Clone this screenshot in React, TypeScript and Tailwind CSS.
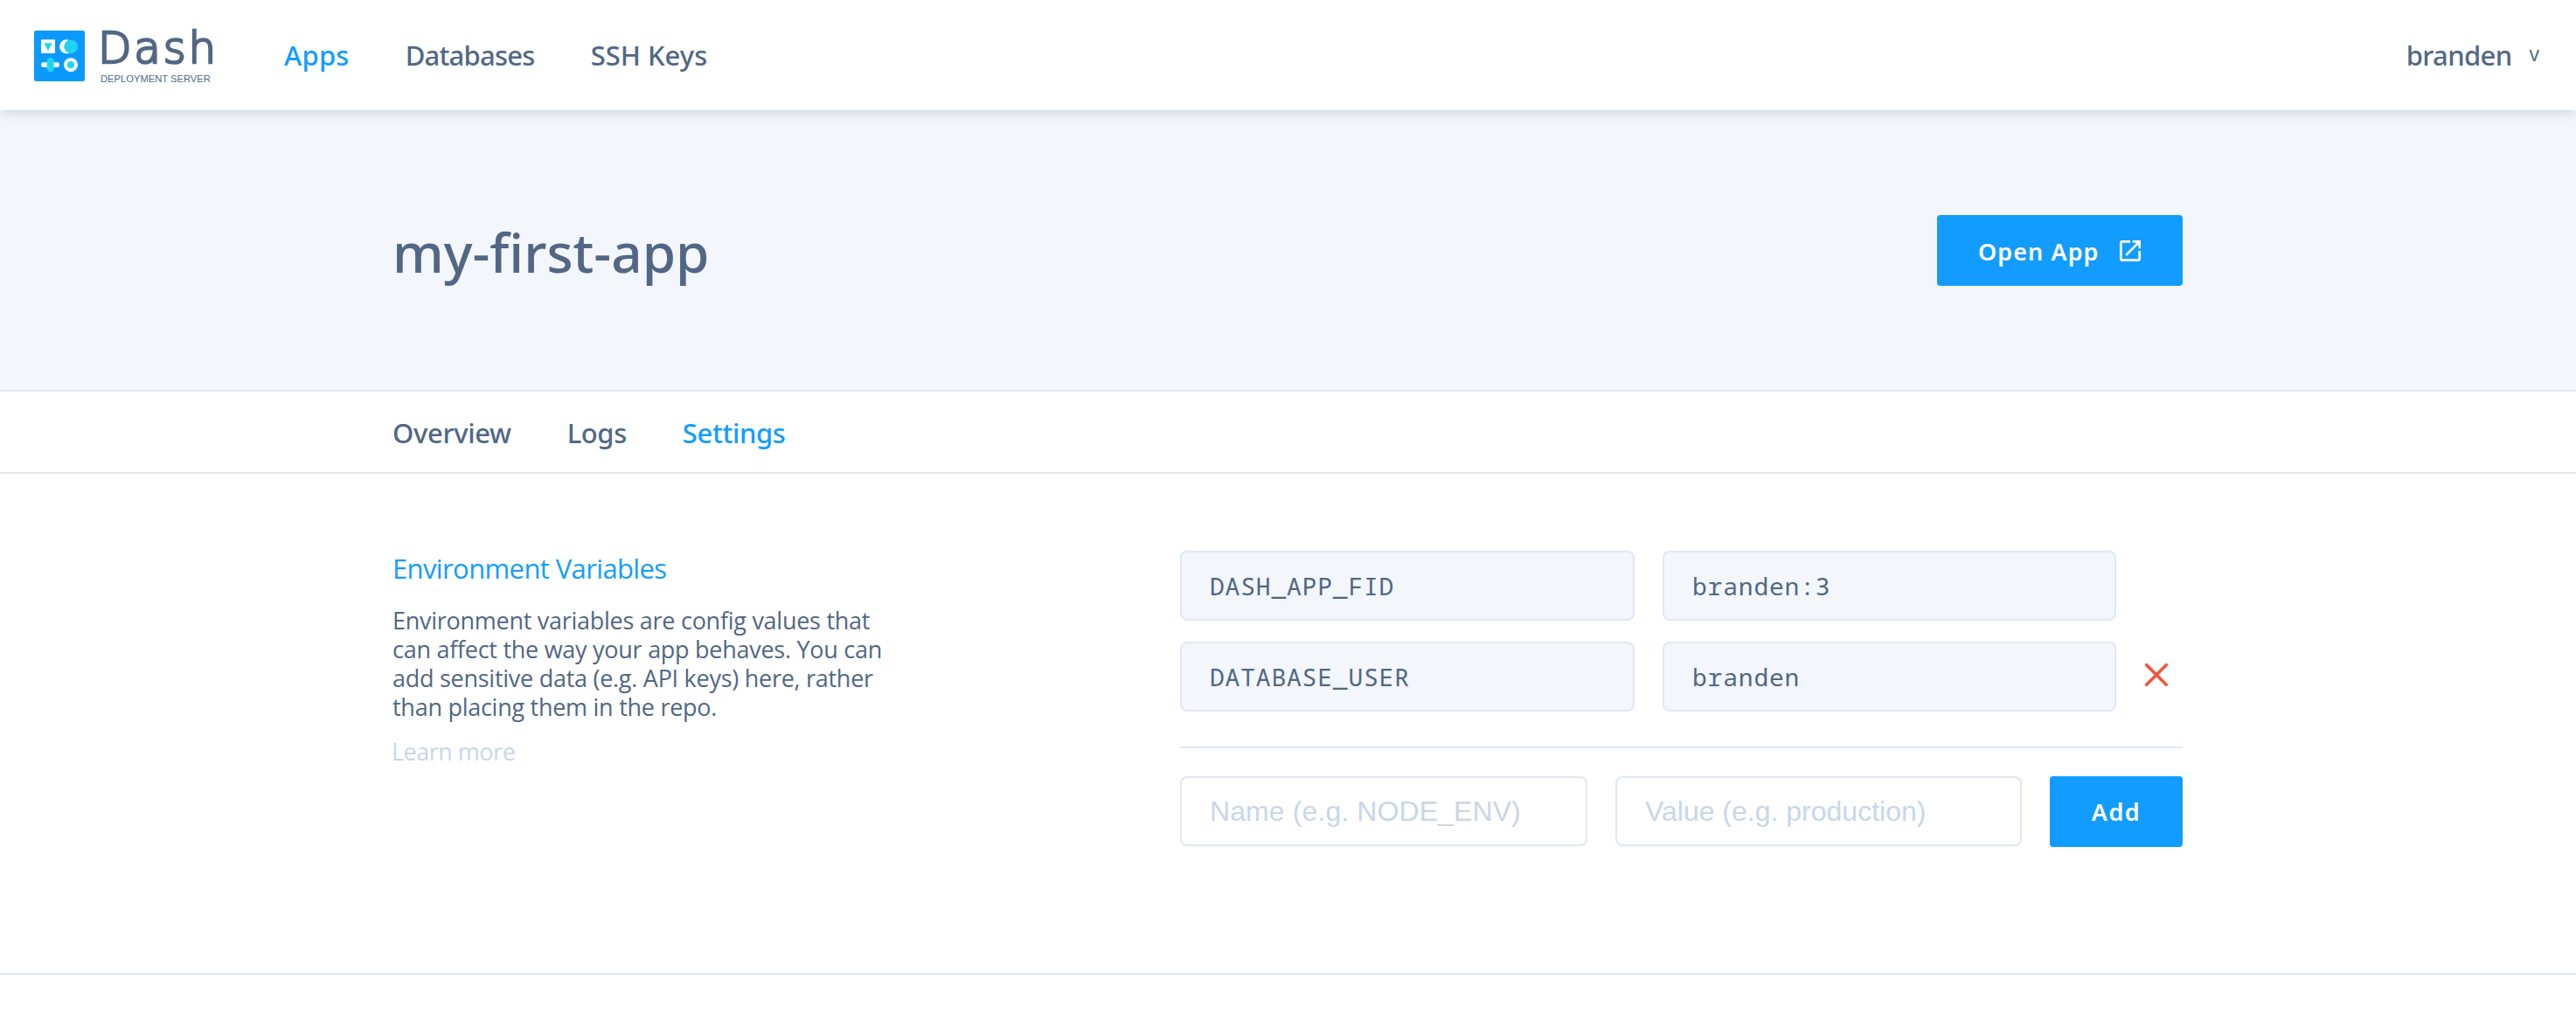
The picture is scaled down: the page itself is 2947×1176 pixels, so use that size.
import { MdOpenInNew } from 'react-icons/md';

function LogoMark() {
  return (
    <svg className="block h-[58px] w-[58px] shrink-0" viewBox="0 0 174 174">
      <rect width="174" height="174" rx="6" fill="#0a9aff" />
      <rect x="24" y="31" width="48" height="47" rx="2" fill="#fff" />
      <path d="M34 43h28L48 69z" fill="#20d3f3" />
      <circle cx="111" cy="55" r="24" fill="#fff" />
      <circle cx="126.500" cy="55" r="23.500" fill="#20d3f3" />
      <rect x="24" y="109" width="63" height="17" rx="8" fill="#fff" />
      <rect x="44" y="93" width="24" height="49" rx="12" fill="#20d3f3" />
      <circle cx="126" cy="117.500" r="24" fill="#fff" />
      <circle cx="126" cy="117.500" r="12.500" fill="#20d3f3" />
    </svg>
  );
}

function Header() {
  return (
    <header className="relative z-10 flex h-[126px] items-center bg-white pl-[39px] pr-[42px] shadow-[0_4px_12px_-2px_rgba(81,103,133,0.28)]">
      <div className="flex w-[286px] items-center pt-0.5">
        <LogoMark />
        <div className="ml-[14px] flex flex-col gap-[3px] pt-px">
          <span className="ml-px font-['DejaVu_Sans'] text-[50px] font-extralight leading-[48px] tracking-[2.8px] [-webkit-text-stroke:2.6px_#516785]">
            Dash
          </span>
          <span className="ml-1 whitespace-nowrap font-['Liberation_Sans'] text-[11.2px] leading-4">DEPLOYMENT SERVER</span>
        </div>
      </div>
      <nav className="flex gap-16 text-[31px] font-medium leading-10">
        <a className="tracking-[0.2px] text-[#149dff]">Apps</a>
        <a className="mr-1 tracking-[-0.76px]">Databases</a>
        <a className="-ml-1">SSH Keys</a>
      </nav>
      <div className="ml-auto flex items-center gap-5">
        <span className="text-[31px] font-medium leading-10 tracking-[-0.65px]">branden</span>
        <span className="pb-1 font-['Open_Sans'] text-[23px] leading-10">v</span>
      </div>
    </header>
  );
}

function Field({ value, className }: { value: string; className: string }) {
  return (
    <div
      className={
        "flex h-20 items-center rounded-lg border-2 border-[#e0e8f4] bg-[#f3f6fb] pl-8 font-['Noto_Sans_Mono','DejaVu_Sans_Mono',monospace] text-[28px] tracking-[0.8px] " +
        className
      }
    >
      {value}
    </div>
  );
}

const variables = [
  { name: 'DASH_APP_FID', value: 'branden:3', removable: false },
  { name: 'DATABASE_USER', value: 'branden', removable: true },
];

const inputClass =
  "h-20 rounded-lg border-2 border-[#e0e8f4] bg-white pl-8 font-['Liberation_Sans'] text-[32px] placeholder:text-[#c9d6e7] placeholder:opacity-100";

export default function App() {
  return (
    <div className="min-h-[1176px] bg-white font-['Noto_Sans','Open_Sans',sans-serif] text-[#516785]">
      <Header />

      <section className="h-[322px] border-b-2 border-[#e0e8f4] bg-[#f3f6fb]">
        <div className="ml-[449px] flex h-[320px] w-[2048px] items-center justify-between">
          <h1 className="pt-1 text-[62px] font-medium leading-[80px]">my-first-app</h1>
          <a className="mt-px flex h-[81px] w-[281px] items-center rounded bg-[#129cff] pl-[47px] text-[27px] font-semibold text-white">
            <span className="whitespace-nowrap pt-[2px] leading-10 tracking-[1.05px]">Open App</span>
            <MdOpenInNew className="ml-[19px] h-8 w-8" />
          </a>
        </div>
      </section>

      <nav className="flex h-[94px] items-center gap-16 border-b-2 border-[#e0e8f4] pl-[449px] pt-[2px] text-[31px] font-medium leading-10">
        <a className="tracking-[-0.35px]">Overview</a>
        <a className="tracking-[-0.4px]">Logs</a>
        <a className="tracking-[-0.37px] text-[#149dff]">Settings</a>
      </nav>

      <section className="h-[573px] border-b-2 border-[#e0e8f4] pt-[88px]">
        <div className="ml-[449px] flex w-[2048px] justify-between">
          <div className="font-['Open_Sans'] text-[27px] leading-[33px] tracking-[-0.27px]">
            <h2 className="text-[31px] leading-10 tracking-[-0.62px] text-[#149dff]">Environment Variables</h2>
            <p className="mt-[23px] w-[580px]">
              Environment variables are config values that
              <br />
              can affect the way your app behaves. You can
              <br />
              add sensitive data (e.g. API keys) here, rather
              <br />
              than placing them in the repo.
            </p>
            <a className="-ml-px mt-[18px] block tracking-[-0.5px] text-[#c9d6e7]">Learn more</a>
          </div>

          <div className="w-[1147px]">
            <div className="flex flex-col gap-6 border-b-2 border-[#e0e8f4] pb-10">
              {variables.map((v) => (
                <div key={v.name} className="flex">
                  <Field value={v.name} className="w-[520px]" />
                  <Field value={v.value} className="ml-8 w-[519px]" />
                  {v.removable && (
                    <button className="ml-8 pb-1" aria-label="Remove">
                      <svg className="h-7 w-7" viewBox="0 0 28 28" stroke="#f1553d" strokeWidth="3.6" strokeLinecap="round">
                        <path d="M2.700 2.700l22.600 22.600M25.300 2.700L2.700 25.300" />
                      </svg>
                    </button>
                  )}
                </div>
              ))}
            </div>
            <div className="mt-8 flex gap-8">
              <input className={inputClass + ' w-[466px] tracking-[0.1px]'} placeholder="Name (e.g. NODE_ENV)" />
              <input className={inputClass + ' w-[465px]'} placeholder="Value (e.g. production)" />
              <button className="h-[81px] w-[152px] rounded bg-[#129cff] pt-[2px] text-[27px] font-semibold tracking-[1.5px] text-white">
                Add
              </button>
            </div>
          </div>
        </div>
      </section>
    </div>
  );
}
